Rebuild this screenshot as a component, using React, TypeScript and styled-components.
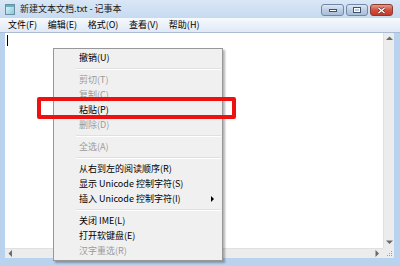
import React from 'react'
import styled, { createGlobalStyle } from 'styled-components'

const GlobalStyle = createGlobalStyle`
  html, body {
    margin: 0;
    padding: 0;
  }
  body {
    width: 400px;
    height: 266px;
    overflow: hidden;
    font-family: "Noto Sans CJK SC", "Liberation Sans", sans-serif;
    font-size: 9px;
    color: #000;
  }
`

const Window = styled.div`
  position: relative;
  width: 400px;
  height: 266px;
  display: flex;
  flex-direction: column;
  background: #b9d3ee;
`

const TitleBar = styled.div`
  height: 18px;
  flex: none;
  display: flex;
  align-items: center;
  padding: 0 7px 0 5px;
  background: linear-gradient(#d9e7f6, #c6daf0);
`

const Title = styled.span`
  margin-left: 5px;
  flex: 1;
  line-height: 12px;
  color: #1b1b1b;
`

const Controls = styled.div`
  display: flex;
  gap: 2px;
  align-self: flex-start;
  margin-top: 4px;
`

const CtrlButton = styled.div<{ $close?: boolean; $w: number }>`
  width: ${p => p.$w}px;
  height: 12px;
  border: 1px solid ${p => (p.$close ? '#8b3a32' : '#6f88aa')};
  border-radius: 3px;
  box-sizing: border-box;
  display: flex;
  align-items: center;
  justify-content: center;
  background: ${p =>
    p.$close
      ? 'linear-gradient(#e59a8c, #d2503f 50%, #c33a2a)'
      : 'linear-gradient(#dfe8f3, #bccde2 50%, #a9bed8)'};
`

const MenuBar = styled.div`
  height: 14px;
  flex: none;
  display: flex;
  align-items: center;
  padding-left: 3px;
  background: linear-gradient(#f6f9fd, #dfe9f5);
  border-bottom: 1px solid #a9bcd4;
`

const MenuBarItem = styled.span`
  padding: 0 5px;
  margin-right: 0.6px;
  line-height: 12px;
  white-space: nowrap;
`

const EditFrame = styled.div`
  flex: 1;
  margin: 0 6px 8px 5px;
  display: grid;
  grid-template-columns: 1fr 11px;
  grid-template-rows: 1fr 10px;
  background: #fff;
  min-height: 0;
`

const Editor = styled.div`
  position: relative;
  padding: 2px 0 0 2px;
`

const Caret = styled.div`
  width: 1px;
  height: 11px;
  background: #000;
`

const VScroll = styled.div`
  display: flex;
  flex-direction: column;
  justify-content: space-between;
  align-items: center;
  background: #ececec;
  border-left: 1px solid #e0e0e0;
  padding: 3px 0;
`

const HScroll = styled.div`
  display: flex;
  justify-content: space-between;
  align-items: center;
  background: #ececec;
  border-top: 1px solid #e0e0e0;
  padding: 0 3px;
`

const Grip = styled.div`
  background: #ececec;
  display: flex;
  align-items: flex-end;
  justify-content: flex-end;
  padding: 0 1px 1px 0;
`

const ContextMenu = styled.div`
  position: absolute;
  left: 53px;
  top: 48px;
  width: 170px;
  box-sizing: border-box;
  padding: 1px 1px 2px;
  background: #f0f0f0;
  border: 1px solid #979797;
  box-shadow: 2px 2px 2px rgba(0, 0, 0, 0.3);
`

const MenuItem = styled.div<{ $disabled?: boolean }>`
  position: relative;
  height: 15px;
  display: flex;
  align-items: center;
  padding-left: 24px;
  line-height: 12px;
  white-space: nowrap;
  color: ${p => (p.$disabled ? '#9b9b9b' : '#000')};
`

const SubArrow = styled.span`
  position: absolute;
  right: 7px;
  top: 5px;
  width: 0;
  height: 0;
  border-top: 3px solid transparent;
  border-bottom: 3px solid transparent;
  border-left: 3px solid #000;
`

const Separator = styled.div`
  height: 7px;
  display: flex;
  align-items: center;
  margin-left: 21px;

  &::after {
    content: '';
    flex: 1;
    height: 1px;
    background: #e0e0e0;
    border-bottom: 1px solid #fff;
  }
`

const Highlight = styled.div`
  position: absolute;
  left: 37px;
  top: 97px;
  width: 199px;
  height: 22px;
  box-sizing: border-box;
  border: 4px solid #ee1111;
  border-radius: 2px;
`

type Entry = { label?: string; disabled?: boolean; sub?: boolean; sep?: boolean }

const entries: Entry[] = [
  { label: '撤销(U)' },
  { sep: true },
  { label: '剪切(T)', disabled: true },
  { label: '复制(C)', disabled: true },
  { label: '粘贴(P)' },
  { label: '删除(D)', disabled: true },
  { sep: true },
  { label: '全选(A)', disabled: true },
  { sep: true },
  { label: '从右到左的阅读顺序(R)' },
  { label: '显示 Unicode 控制字符(S)' },
  { label: '插入 Unicode 控制字符(I)', sub: true },
  { sep: true },
  { label: '关闭 IME(L)' },
  { label: '打开软键盘(E)' },
  { label: '汉字重选(R)', disabled: true },
]

const menus = ['文件(F)', '编辑(E)', '格式(O)', '查看(V)', '帮助(H)']

const NotepadIcon = () => (
  <svg width="10" height="11" viewBox="0 0 10 11">
    <defs>
      <linearGradient id="np" x1="0" y1="0" x2="1" y2="1">
        <stop offset="0" stopColor="#e9f7fb" />
        <stop offset="1" stopColor="#7fc7d8" />
      </linearGradient>
    </defs>
    <rect x="0.5" y="0.5" width="9" height="10" fill="url(#np)" stroke="#6b8ea0" />
    <rect x="1" y="1" width="8" height="2" fill="#5fb2c9" />
  </svg>
)

const Arrow = ({ dir }: { dir: 'up' | 'down' | 'left' | 'right' }) => {
  const pts = {
    up: '0,4 3.5,0.5 7,4',
    down: '0,0.5 3.5,4 7,0.5',
    left: '4,0 0.5,3.5 4,7',
    right: '0.5,0 4,3.5 0.5,7',
  }[dir]
  const vertical = dir === 'up' || dir === 'down'
  return (
    <svg width={vertical ? 7 : 5} height={vertical ? 5 : 7} viewBox={vertical ? '0 0 7 5' : '0 0 5 7'}>
      <polygon points={pts} fill="#6a6a6a" />
    </svg>
  )
}

const App = () => {
  return (
    <>
      <GlobalStyle />
      <Window>
        <TitleBar>
          <NotepadIcon />
          <Title>新建文本文档.txt - 记事本</Title>
          <Controls>
            <CtrlButton $w={23}>
              <svg width="8" height="3" viewBox="0 0 8 3">
                <rect x="0.5" y="0.5" width="7" height="2" fill="#fff" stroke="#3d5270" />
              </svg>
            </CtrlButton>
            <CtrlButton $w={22}>
              <svg width="8" height="6" viewBox="0 0 8 6">
                <rect x="0.5" y="0.5" width="7" height="5" fill="none" stroke="#3d5270" />
                <rect x="1.5" y="1.5" width="5" height="3" fill="none" stroke="#fff" />
              </svg>
            </CtrlButton>
            <CtrlButton $w={23} $close>
              <svg width="9" height="7" viewBox="0 0 9 7">
                <path d="M1.5 1 L7.5 6 M7.5 1 L1.5 6" stroke="#6b2a22" strokeWidth="2.6" />
                <path d="M1.5 1 L7.5 6 M7.5 1 L1.5 6" stroke="#fff" strokeWidth="1.4" />
              </svg>
            </CtrlButton>
          </Controls>
        </TitleBar>
        <MenuBar>
          {menus.map(m => (
            <MenuBarItem key={m}>{m}</MenuBarItem>
          ))}
        </MenuBar>
        <EditFrame>
          <Editor>
            <Caret />
          </Editor>
          <VScroll>
            <Arrow dir="up" />
            <Arrow dir="down" />
          </VScroll>
          <HScroll>
            <Arrow dir="left" />
            <Arrow dir="right" />
          </HScroll>
          <Grip>
            <svg width="6" height="6" viewBox="0 0 6 6">
              <rect x="4" y="0" width="1" height="1" fill="#a0a0a0" />
              <rect x="2" y="2" width="1" height="1" fill="#a0a0a0" />
              <rect x="4" y="2" width="1" height="1" fill="#a0a0a0" />
              <rect x="0" y="4" width="1" height="1" fill="#a0a0a0" />
              <rect x="2" y="4" width="1" height="1" fill="#a0a0a0" />
              <rect x="4" y="4" width="1" height="1" fill="#a0a0a0" />
            </svg>
          </Grip>
        </EditFrame>
        <ContextMenu>
          {entries.map((e, i) =>
            e.sep ? (
              <Separator key={i} />
            ) : (
              <MenuItem key={i} $disabled={e.disabled}>
                {e.label}
                {e.sub && <SubArrow />}
              </MenuItem>
            )
          )}
        </ContextMenu>
        <Highlight />
      </Window>
    </>
  )
}

export default App
